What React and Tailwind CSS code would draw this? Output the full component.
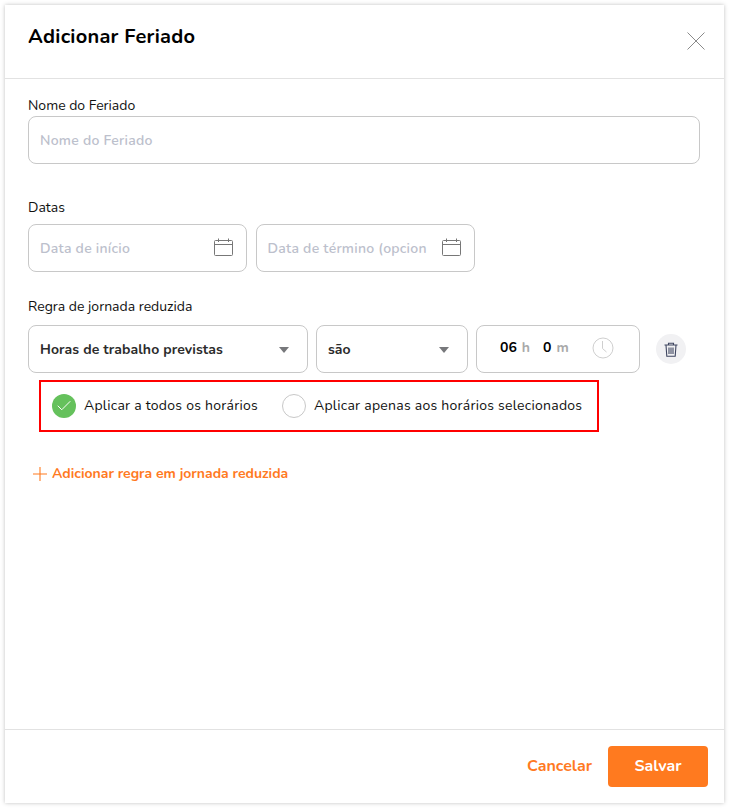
import React from "react";
import { Check } from "lucide-react";

function CloseIcon() {
    return (
        <svg width="18" height="18" viewBox="0 0 18 18" fill="none" stroke="#8a8a8a" strokeWidth="1" className="mt-[27px]">
            <path d="M0.5 0.5l17 17M17.5 0.5l-17 17" />
        </svg>
    );
}

function PlusIcon() {
    return (
        <svg width="14" height="14" viewBox="0 0 14 14" fill="none" stroke="#ff7a1f" strokeWidth="1.1">
            <path d="M7 0v14M0 7h14" />
        </svg>
    );
}

function CalendarIcon() {
    return (
        <svg width="20" height="20" viewBox="0 0 20 20" fill="none" stroke="#777" strokeWidth="1" className="shrink-0">
            <rect x="1.5" y="2.5" width="18" height="15" rx="1" />
            <path d="M1.5 6.5h18M5.5 0.5v3.5M15.5 0.5v3.5" />
        </svg>
    );
}

function ClockIcon() {
    return (
        <svg width="22" height="22" viewBox="0 0 22 22" fill="none" stroke="#cfcfcf" strokeWidth="1">
            <circle cx="11" cy="11" r="10" />
            <path d="M10.5 4v7.5l4 3.5" />
        </svg>
    );
}

function TrashIcon() {
    return (
        <svg width="14" height="15" viewBox="0 0 14 15" fill="none" stroke="#3f4660" strokeWidth="1.1">
            <path d="M0.5 3h13M4.5 3V1.2h5V3M2 3l0.8 11.3h8.4L12 3M5 5.5v6.5M7 5.5v6.5M9 5.5v6.5" />
        </svg>
    );
}

function Caret() {
    return <div className="w-0 h-0 mt-[2px] border-x-[5px] border-x-transparent border-t-[6px] border-t-[#77787b]" />;
}

function DateField({ placeholder, width }) {
    return (
        <div className={`${width} h-12 border border-[#c8c8c8] rounded-lg flex items-center justify-between pl-[11px] pr-[13px]`}>
            <span className="text-sm font-semibold tracking-[0.25px] text-[#bcc0cc] overflow-hidden whitespace-nowrap pt-px">{placeholder}</span>
            <CalendarIcon />
        </div>
    );
}

export default function App() {
    return (
        <div className="w-[729px] h-[808px] bg-white p-[5px] text-[#111] font-['Nunito','Lato','Noto_Sans',sans-serif]">
            <div className="h-[798px] w-[719px] bg-white flex flex-col shadow-[0_0_4px_rgba(0,0,0,0.25)]">
                <div className="h-[74px] border-b border-[#e2e2e2] flex justify-between pl-[23px] pr-[19px] shrink-0">
                    <h1 className="text-xl font-bold mt-[18px] leading-[27px] tracking-[0.25px] text-black">Adicionar Feriado</h1>
                    <CloseIcon />
                </div>

                <div className="flex-1 px-[23px] pt-[17px]">
                    <label className="block text-sm leading-5">Nome do Feriado</label>
                    <div className="w-[672px] h-12 border border-[#c8c8c8] rounded-lg flex items-center pl-[11px] pt-px">
                        <span className="text-sm font-semibold tracking-[0.25px] text-[#bcc0cc]">Nome do Feriado</span>
                    </div>

                    <label className="block text-sm leading-5 mt-[34px] mb-[6px]">Datas</label>
                    <div className="flex gap-[8.5px]">
                        <DateField placeholder="Data de início" width="w-[219px]" />
                        <DateField placeholder="Data de término (opcion" width="w-[219.5px]" />
                    </div>

                    <label className="block text-sm leading-5 mt-[25px] mb-[8px]">Regra de jornada reduzida</label>
                    <div className="flex items-center">
                        <div className="w-[280px] h-12 border border-[#c8c8c8] rounded-lg flex items-center justify-between pl-[11px] pr-[18px]">
                            <span className="text-sm font-bold tracking-[0.1px] text-[#2b2b2b] pt-px">Horas de trabalho previstas</span>
                            <Caret />
                        </div>
                        <div className="w-[152px] h-12 ml-2 border border-[#c8c8c8] rounded-lg flex items-center justify-between pl-[11px] pr-[18px]">
                            <span className="text-sm font-bold text-[#2b2b2b] pt-px">são</span>
                            <Caret />
                        </div>
                        <div className="w-[164px] h-12 ml-2 border border-[#c8c8c8] rounded-lg flex items-center pl-[23px] text-sm font-bold">
                            <span className="text-black -mt-[2px]">06</span>
                            <span className="ml-[5px] text-[#a9a9a9] -mt-[2px]">h</span>
                            <span className="ml-[13px] text-black -mt-[2px]">0</span>
                            <span className="ml-[5px] text-[#a9a9a9] -mt-[2px]">m</span>
                            <span className="ml-[23px] -mt-[2px]"><ClockIcon /></span>
                        </div>
                        <div className="w-[30px] h-[30px] ml-4 rounded-full bg-[#f1f1f3] flex items-center justify-center">
                            <TrashIcon />
                        </div>
                    </div>

                    <div className="ml-[11px] mt-[7px] w-[560px] h-[52px] border-2 border-[#ff0000] flex items-center pl-[11px] text-sm tracking-[0.25px]">
                        <div className="w-6 h-6 rounded-full bg-[#65c15c] flex items-center justify-center">
                            <Check size={18} strokeWidth={1.3} className="text-white" />
                        </div>
                        <span className="ml-2">Aplicar a todos os horários</span>
                        <div className="w-6 h-6 ml-6 rounded-full border border-[#c8c8c8]" />
                        <span className="ml-2">Aplicar apenas aos horários selecionados</span>
                    </div>

                    <div className="flex items-center mt-[32px] ml-[5px] text-[#ff7a1f]">
                        <PlusIcon />
                        <span className="ml-[5px] text-sm font-bold">Adicionar regra em jornada reduzida</span>
                    </div>
                </div>

                <div className="h-[74px] border-t border-[#e2e2e2] flex items-center justify-end pr-4 shrink-0">
                    <button className="text-base font-bold text-[#ff7a1f] mr-4 pb-[2px]">Cancelar</button>
                    <button className="w-[100px] h-[41px] rounded bg-[#ff7a1f] text-white text-base font-bold pb-[2px]">Salvar</button>
                </div>
            </div>
        </div>
    );
}
